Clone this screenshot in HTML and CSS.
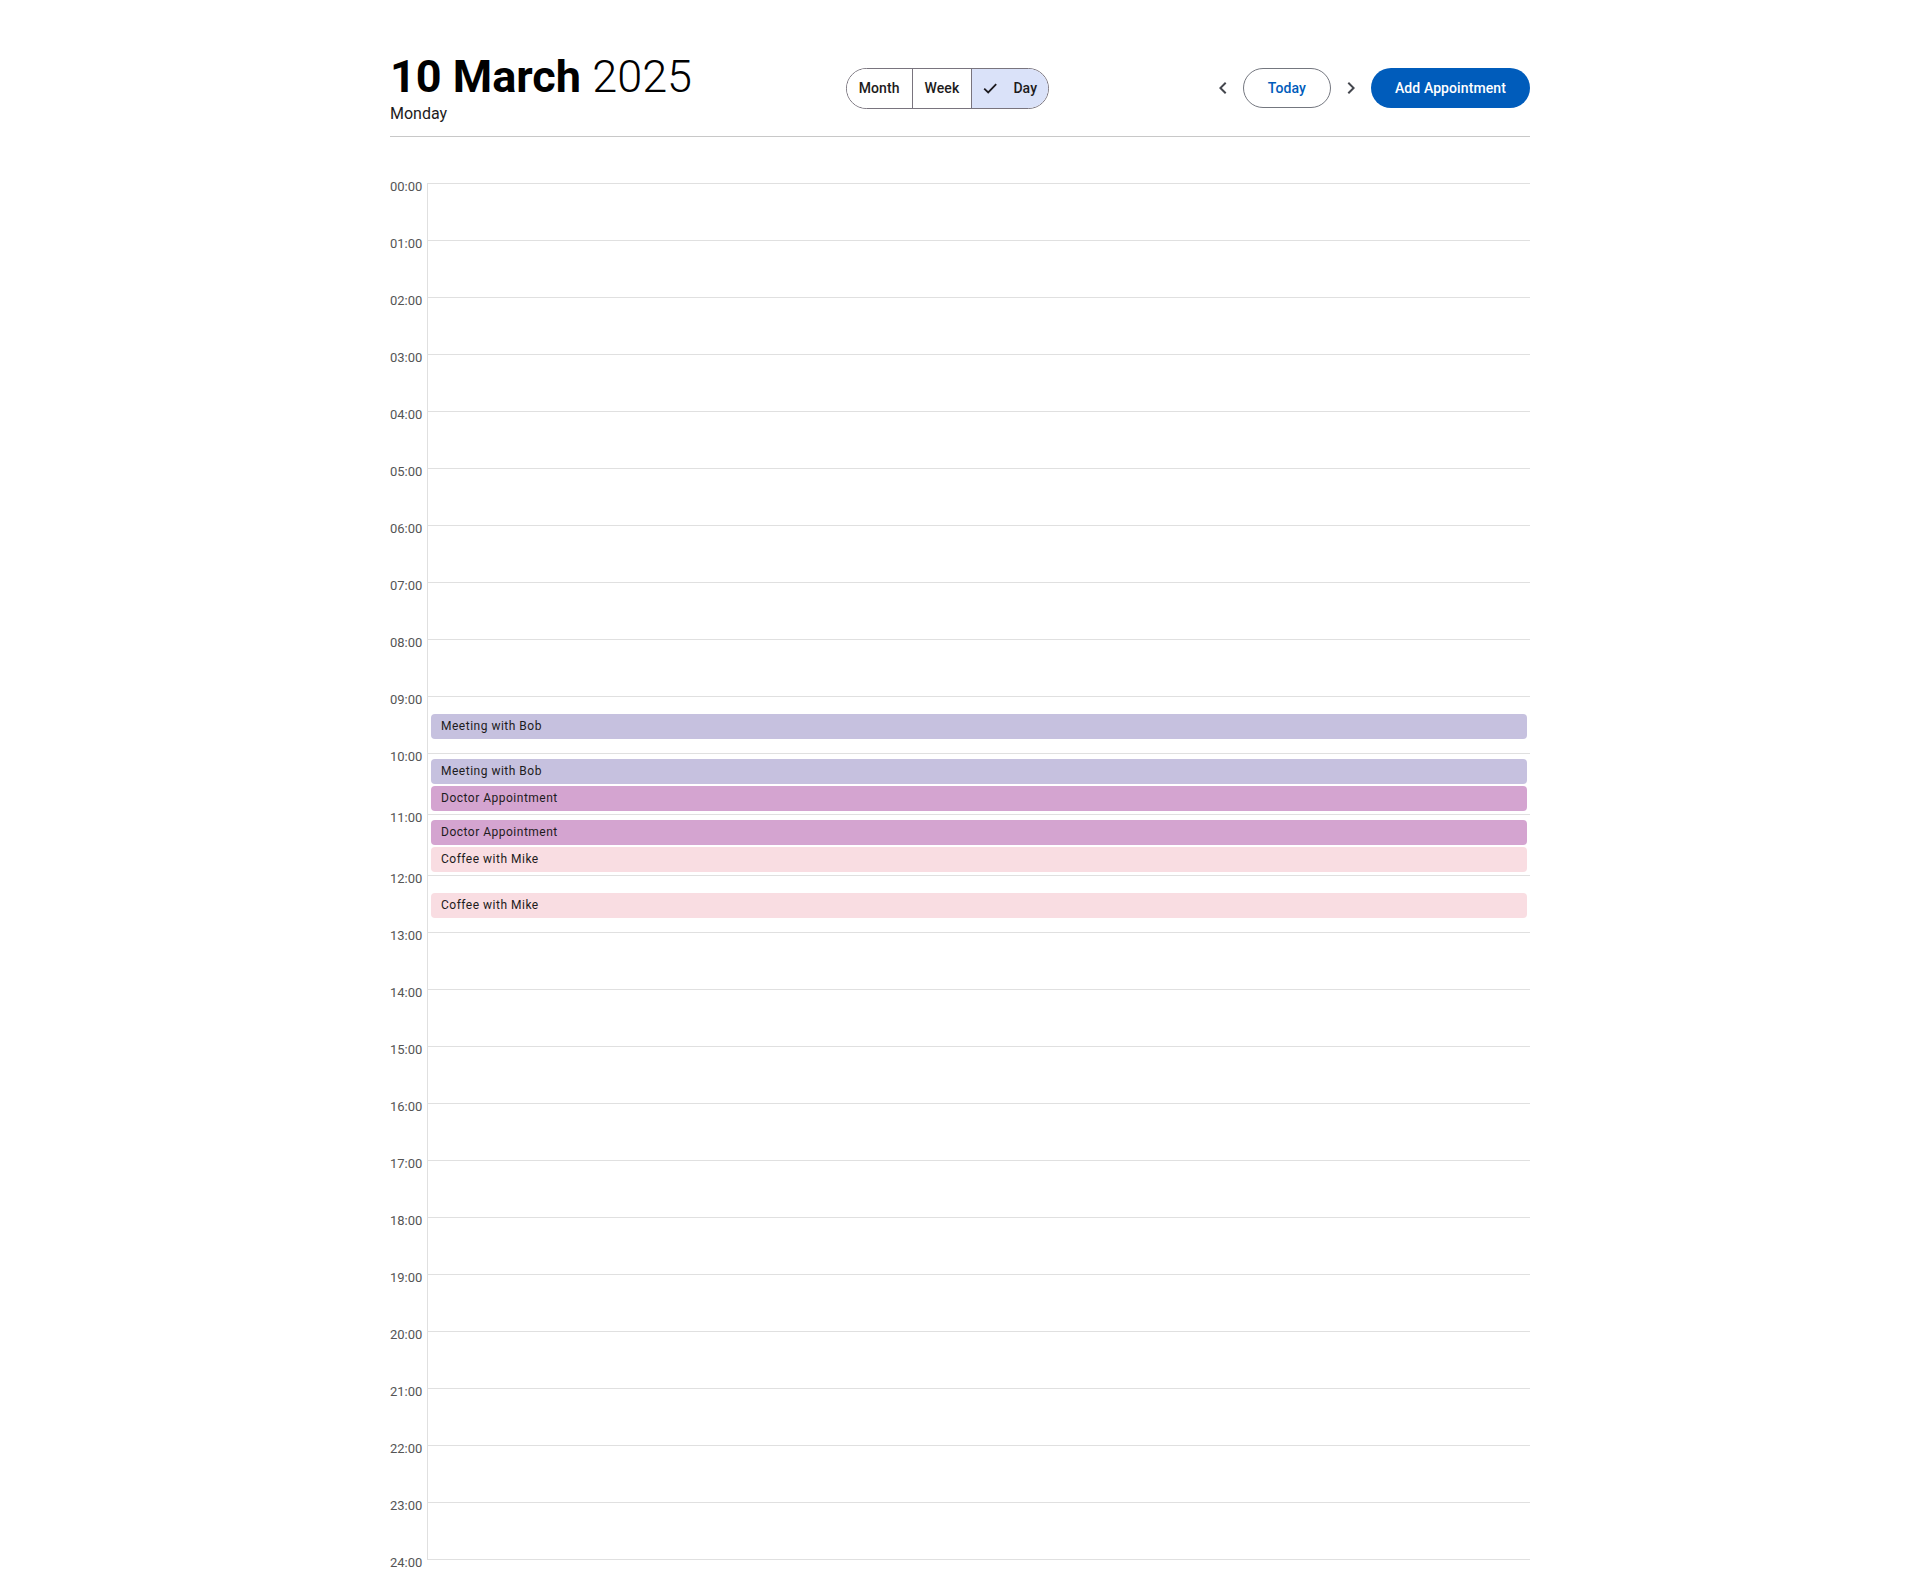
FILE: index.html
```html
<!DOCTYPE html>
<html lang="en">
<head>
<meta charset="utf-8">
<title>Calendar – Day</title>
<link rel="stylesheet" href="styles.css">
</head>
<body>
<div class="page">
  <header class="header">
    <div class="title-block">
      <h1 class="title"><span class="title-date">10 March</span> <span class="title-year">2025</span></h1>
      <div class="subtitle">Monday</div>
    </div>
    <div class="segmented">
      <button class="seg">Month</button>
      <button class="seg">Week</button>
      <button class="seg seg-selected"><svg class="seg-icon" viewBox="0 0 18 18"><polyline points="2.2,9.6 6.2,13.4 14.2,5.2"/></svg>Day</button>
    </div>
    <div class="nav">
      <button class="icon-btn" aria-label="Previous"><svg viewBox="0 0 24 24"><path d="M15.41 7.41L14 6l-6 6 6 6 1.41-1.41L10.83 12z"/></svg></button>
      <button class="btn-outline">Today</button>
      <button class="icon-btn" aria-label="Next"><svg viewBox="0 0 24 24"><path d="M10 6L8.59 7.41 13.17 12l-4.58 4.59L10 18l6-6z"/></svg></button>
      <button class="btn-filled">Add Appointment</button>
    </div>
  </header>

  <div class="day-grid">
    <div class="row"><div class="hour">00:00</div><div class="cell"></div></div>
    <div class="row"><div class="hour">01:00</div><div class="cell"></div></div>
    <div class="row"><div class="hour">02:00</div><div class="cell"></div></div>
    <div class="row"><div class="hour">03:00</div><div class="cell"></div></div>
    <div class="row"><div class="hour">04:00</div><div class="cell"></div></div>
    <div class="row"><div class="hour">05:00</div><div class="cell"></div></div>
    <div class="row"><div class="hour">06:00</div><div class="cell"></div></div>
    <div class="row"><div class="hour">07:00</div><div class="cell"></div></div>
    <div class="row"><div class="hour">08:00</div><div class="cell"></div></div>
    <div class="row"><div class="hour">09:00</div><div class="cell">
      <div class="event ev-meeting">Meeting with Bob</div>
    </div></div>
    <div class="row"><div class="hour">10:00</div><div class="cell">
      <div class="event ev-meeting">Meeting with Bob</div>
      <div class="event ev-doctor">Doctor Appointment</div>
    </div></div>
    <div class="row"><div class="hour">11:00</div><div class="cell">
      <div class="event ev-doctor">Doctor Appointment</div>
      <div class="event ev-coffee">Coffee with Mike</div>
    </div></div>
    <div class="row"><div class="hour">12:00</div><div class="cell">
      <div class="event ev-coffee">Coffee with Mike</div>
    </div></div>
    <div class="row"><div class="hour">13:00</div><div class="cell"></div></div>
    <div class="row"><div class="hour">14:00</div><div class="cell"></div></div>
    <div class="row"><div class="hour">15:00</div><div class="cell"></div></div>
    <div class="row"><div class="hour">16:00</div><div class="cell"></div></div>
    <div class="row"><div class="hour">17:00</div><div class="cell"></div></div>
    <div class="row"><div class="hour">18:00</div><div class="cell"></div></div>
    <div class="row"><div class="hour">19:00</div><div class="cell"></div></div>
    <div class="row"><div class="hour">20:00</div><div class="cell"></div></div>
    <div class="row"><div class="hour">21:00</div><div class="cell"></div></div>
    <div class="row"><div class="hour">22:00</div><div class="cell"></div></div>
    <div class="row"><div class="hour">23:00</div><div class="cell"></div></div>
    <div class="row row-end"><div class="hour">24:00</div><div class="cell cell-end"></div></div>
  </div>
</div>
</body>
</html>
```

FILE: styles.css
```css
html, body {
  margin: 0;
  padding: 0;
  background: #ffffff;
}

body {
  font-family: Roboto, "Liberation Sans", Arial, sans-serif;
  color: #1d1b20;
}

button {
  font-family: inherit;
  cursor: pointer;
}

.page {
  width: 1140px;
  margin: 0 auto;
  padding-top: 51px;
}

/* ---------- header ---------- */
.header {
  display: flex;
  justify-content: space-between;
  align-items: center;
  padding-bottom: 11px;
  border-bottom: 1px solid #c8c8c8;
}

.title {
  margin: 0;
  font-size: 45px;
  line-height: 52px;
  color: #000000;
  font-weight: 700;
}

.title-year {
  font-weight: 300;
}

.subtitle {
  font-size: 16px;
  line-height: 22px;
  color: #1d1b20;
}

.segmented {
  display: flex;
  height: 41px;
  border: 1px solid #79747e;
  border-radius: 21px;
  overflow: hidden;
  box-sizing: border-box;
}

.seg {
  display: flex;
  align-items: center;
  height: 100%;
  padding: 0 12px;
  border: none;
  border-left: 1px solid #79747e;
  background: #ffffff;
  font-size: 14px;
  font-weight: 500;
  letter-spacing: 0.1px;
  color: #1d1b20;
}

.seg:first-child {
  border-left: none;
}

.seg-selected {
  background: #dae2f9;
  padding: 0 11px 0 10px;
  gap: 13px;
}

.seg-icon {
  width: 18px;
  height: 18px;
  fill: none;
  stroke: #1d1b20;
  stroke-width: 1.8;
}

.nav {
  display: flex;
  align-items: center;
}

.icon-btn {
  width: 40px;
  height: 40px;
  padding: 0;
  border: none;
  background: transparent;
  display: flex;
  align-items: center;
  justify-content: center;
}

.icon-btn svg {
  width: 24px;
  height: 24px;
  fill: #44474e;
}

.btn-outline {
  height: 40px;
  padding: 0 24px;
  border: 1px solid #74777f;
  border-radius: 20px;
  background: #ffffff;
  color: #005cbb;
  font-size: 14px;
  font-weight: 500;
  letter-spacing: 0.1px;
}

.btn-filled {
  height: 40px;
  padding: 0 24px;
  border: none;
  border-radius: 20px;
  background: #005cbb;
  color: #ffffff;
  font-size: 14px;
  font-weight: 500;
  letter-spacing: 0.1px;
}

/* ---------- day grid ---------- */
.day-grid {
  margin-top: 46px;
}

.row {
  display: grid;
  grid-template-columns: 37px 1fr;
}

.hour {
  margin-top: -4px;
  padding-right: 6px;
  text-align: right;
  font-size: 13px;
  line-height: 15px;
  color: #555555;
}

.cell {
  box-sizing: border-box;
  min-height: 57px;
  padding: 5px 3px 3px;
  border-top: 1px solid #e0e0e0;
  border-left: 1px solid #e0e0e0;
  display: flex;
  flex-direction: column;
  justify-content: center;
  gap: 2px;
}

.cell-end {
  min-height: 0;
  padding: 0;
  border-left: none;
}

.event {
  height: 25px;
  line-height: 25px;
  padding: 0 10px;
  border-radius: 4px;
  font-size: 12px;
  letter-spacing: 0.5px;
  color: #1d1b20;
  white-space: nowrap;
  overflow: hidden;
}

.ev-meeting { background: #c6c1df; }
.ev-doctor  { background: #d4a4d0; }
.ev-coffee  { background: #f9dde2; }
```
